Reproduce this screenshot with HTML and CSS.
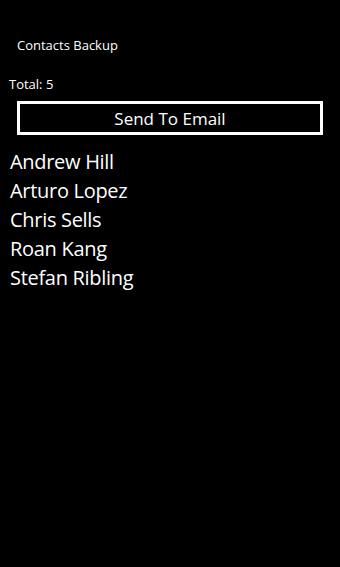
FILE: index.html
```html
<!DOCTYPE html>
<html>
<head>
<meta charset="utf-8">
<link rel="stylesheet" href="styles.css">
</head>
<body>
<div class="page">
  <div class="app-title">Contacts Backup</div>
  <div class="total">Total: 5</div>
  <button class="send-btn">Send To Email</button>
  <ul class="contacts">
    <li>Andrew Hill</li>
    <li>Arturo Lopez</li>
    <li>Chris Sells</li>
    <li>Roan Kang</li>
    <li>Stefan Ribling</li>
  </ul>
</div>
</body>
</html>
```
FILE: styles.css
```css
html, body {
  margin: 0;
  padding: 0;
  background: #000;
  height: 100%;
}
.page {
  font-family: "Open Sans", "Noto Sans", sans-serif;
  color: #fff;
  display: flex;
  flex-direction: column;
  padding-top: 35px;
}
.app-title {
  font-size: 13px;
  line-height: 20px;
  padding-left: 17px;
}
.total {
  font-size: 13px;
  line-height: 20px;
  padding-left: 9px;
  margin-top: 19px;
}
.send-btn {
  margin: 7px 17px 0 17px;
  height: 34px;
  background: #000;
  color: #fff;
  border: 3px solid #fff;
  font-family: inherit;
  font-size: 17px;
  font-weight: 500;
  padding: 0;
}
.contacts {
  list-style: none;
  margin: 12px 0 0 0;
  padding: 0 0 0 10px;
}
.contacts li {
  font-size: 20px;
  font-weight: 500;
  letter-spacing: -0.3px;
  line-height: 29px;
}
```
